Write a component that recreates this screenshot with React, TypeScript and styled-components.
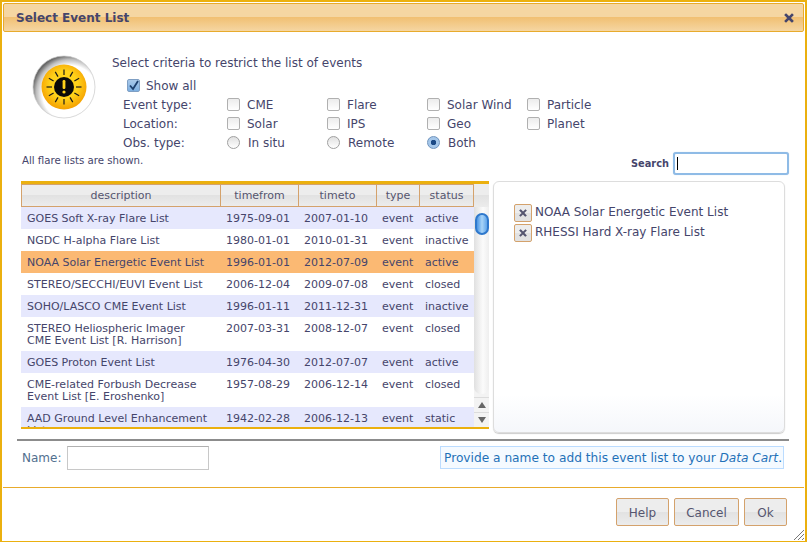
import React from 'react';
import styled, { createGlobalStyle } from 'styled-components';

const GlobalStyle = createGlobalStyle`
    html, body { margin: 0; padding: 0; background: #fff; }
    body { font-family: "DejaVu Sans", Verdana, sans-serif; font-size: 11px; color: #45456b; }
    * { box-sizing: border-box; }
`;

const Dialog = styled.div`
    position: relative;
    width: 807px;
    height: 542px;
    border: 2px solid #ebb00f;
    border-bottom-width: 1px;
    padding: 1px 1px 0;
    background: #fff;
    display: flex;
    flex-direction: column;
`;

const TitleBar = styled.div`
    height: 29px;
    flex: none;
    border: 1px solid #e8ab2c;
    border-radius: 2px;
    background: linear-gradient(to bottom, #f5d6a2 0, #f5d6a2 50%, #f1c073 50%, #f5d6a2 100%);
    display: flex;
    align-items: center;
    justify-content: space-between;
    padding: 0 9px 0 12px;
    font-weight: bold;
    font-size: 12px;
    color: #45456b;
`;

const Body = styled.div`
    flex: 1;
    display: flex;
    flex-direction: column;
    min-height: 0;
`;

const Criteria = styled.div`
    display: flex;
    align-items: flex-start;
    height: 118px;
    padding: 23px 0 0 29px;
    flex: none;
`;

const Badge = styled.svg`
    width: 64px;
    height: 64px;
    flex: none;
`;

const CriteriaForm = styled.div`
    margin-left: 16px;
    display: flex;
    flex-direction: column;
    flex: none;
    font-size: 12px;
`;

const Intro = styled.div`
    height: 16px;
    line-height: 16px;
`;

const ShowAll = styled.label`
    display: flex;
    align-items: center;
    height: 19px;
    margin: 5px 0 0 15px;
    gap: 6px;
`;

const FilterRow = styled.div`
    display: flex;
    align-items: center;
    height: 19px;
    flex: none;
    padding-left: 11px;
`;

const FilterLabel = styled.span`
    width: 104px;
    flex: none;
`;

const Option = styled.label`
    width: 100px;
    flex: none;
    display: flex;
    align-items: center;
    gap: 7px;
`;

const CheckBox = styled.span<{ $checked?: boolean }>`
    width: 13px;
    height: 13px;
    flex: none;
    display: flex;
    align-items: center;
    justify-content: center;
    border: 1px solid ${p => (p.$checked ? '#7f9fc4' : '#b0b0b0')};
    border-radius: 2px;
    background: ${p => (p.$checked ? 'linear-gradient(#a9c9ea, #7eb0e2)' : 'linear-gradient(#ececec, #ffffff)')};
`;

const Radio = styled.span<{ $checked?: boolean }>`
    width: 13px;
    height: 13px;
    flex: none;
    border: 1px solid ${p => (p.$checked ? '#6f93bd' : '#a0a0a0')};
    border-radius: 50%;
    background: ${p => (p.$checked ? 'radial-gradient(circle, #1c4a86 0, #1c4a86 2.5px, #a5c7ea 3px)' : 'linear-gradient(#e0e0e0, #ffffff)')};
    margin-right: 1px;
`;

const SearchRow = styled.div`
    flex: none;
    height: 31px;
    display: flex;
    align-items: flex-start;
    justify-content: space-between;
    padding: 2px 15px 0 19px;
`;

const Hint = styled.div`
    font-size: 10.2px;
    line-height: 12px;
    margin-top: 3px;
`;

const SearchGroup = styled.label`
    display: flex;
    align-items: center;
    gap: 4px;
    font-size: 9.8px;
    font-weight: bold;
`;

const SearchInput = styled.div`
    width: 116px;
    height: 23px;
    border: 2px solid #8fbbe6;
    border-radius: 3px;
    box-shadow: 0 0 1px #b8cfe8;
    padding: 3px 2px;
    background: #fff;
    &::before {
        content: "";
        display: block;
        width: 1px;
        height: 13px;
        background: #000;
    }
`;

const Panels = styled.div`
    flex: none;
    display: flex;
    align-items: flex-start;
    gap: 4px;
    padding-left: 18px;
    height: 252px;
`;

const TableFrame = styled.div`
    width: 468px;
    height: 248px;
    border-top: 3px solid #ebb00f;
    border-bottom: 2px solid #ebb00f;
    display: flex;
    overflow: hidden;
`;

const Table = styled.div`
    width: 453px;
    flex: none;
    display: flex;
    flex-direction: column;
    overflow: hidden;
`;

const COLUMNS = '199px 78px 78px 43px 54px';

const HeaderRow = styled.div`
    display: grid;
    grid-template-columns: ${COLUMNS};
    height: 23px;
    flex: none;
`;

const HeaderCell = styled.div`
    display: flex;
    align-items: center;
    justify-content: center;
    border: 1px solid #d4a26c;
    margin-right: -1px;
    background: linear-gradient(to bottom, #ededed 0, #ededed 50%, #e2e2e2 50%, #ececec 100%);
    color: #55556f;
    font-size: 11px;
`;

const Row = styled.div<{ $tint: 'plain' | 'odd' | 'picked' }>`
    display: grid;
    grid-template-columns: ${COLUMNS};
    flex: none;
    background: ${p => ({ plain: '#fff', odd: '#e6e8fd', picked: '#fbb973' }[p.$tint])};
`;

const Cell = styled.div`
    padding: 6px 0 4px 6px;
    line-height: 12px;
    font-size: 11px;
    white-space: nowrap;
`;

const DescriptionCell = styled(Cell)`
    padding-right: 9px;
    white-space: normal;
`;

const Scrollbar = styled.div`
    width: 15px;
    flex: none;
    display: flex;
    flex-direction: column;
    background: #f3f3f3;
`;

const ScrollHead = styled.div`
    height: 23px;
    flex: none;
    background: linear-gradient(to bottom, #ededed 0, #ededed 50%, #e2e2e2 50%, #ececec 100%);
`;

const ScrollTrack = styled.div`
    flex: 1;
    padding-top: 6px;
    display: flex;
    justify-content: center;
    border-radius: 0 0 7px 7px;
    margin-bottom: 3px;
    background: linear-gradient(to right, #e0e0e0, #fbfbfb 60%, #eeeeee);
`;

const Thumb = styled.div`
    width: 14px;
    height: 22px;
    border-radius: 7px;
    border: 2px solid #2f78cc;
    background: linear-gradient(to right, #4b95e4, #a8d4f8 50%, #5fa4ea);
`;

const ScrollArrow = styled.div<{ $up?: boolean }>`
    height: 15px;
    flex: none;
    display: flex;
    align-items: center;
    justify-content: center;
    background: #f3f3f3;
    border-top: 1px solid #dcdcdc;
    &::before {
        content: "";
        border-left: 4px solid transparent;
        border-right: 4px solid transparent;
        ${p => (p.$up ? 'border-bottom: 6px solid #666;' : 'border-top: 6px solid #666;')}
    }
`;

const Selected = styled.div`
    width: 292px;
    height: 252px;
    border: 1px solid #ddd;
    border-radius: 6px;
    background: linear-gradient(to bottom, #fff 85%, #f5f7fb);
    padding: 21px 20px;
    box-shadow: 0 1px 1px #ccc;
`;

const Chip = styled.div`
    display: flex;
    align-items: center;
    height: 20px;
    font-size: 12px;
    gap: 3px;
`;

const ChipLabel = styled.span`
    margin-top: -2px;
`;

const ChipRemove = styled.span`
    width: 18px;
    height: 18px;
    border: 1px solid #d4a26c;
    border-radius: 2px;
    background: linear-gradient(to bottom, #ededed 50%, #e2e2e2 50%);
    display: flex;
    align-items: center;
    justify-content: center;
`;

const Divider = styled.div`
    flex: none;
    height: 2px;
    margin: 6px 15px 0 14px;
    background: #8c8c8c;
`;

const NameRow = styled.div`
    flex: none;
    height: 46px;
    display: flex;
    align-items: flex-start;
    justify-content: space-between;
    padding: 5px 20px 0 19px;
`;

const NameGroup = styled.label`
    display: flex;
    align-items: center;
    gap: 6px;
    font-size: 12px;
    color: #52708f;
`;

const NameInput = styled.div`
    width: 142px;
    height: 24px;
    border: 1px solid #c8c8c8;
    border-top-color: #b0b0b0;
    background: #fff;
`;

const Notice = styled.div`
    height: 23px;
    width: 344px;
    white-space: nowrap;
    border: 1px solid #bbdcff;
    background: #f5faff;
    color: #1f71b8;
    font-size: 12.2px;
    display: flex;
    align-items: center;
    padding: 1px 0 0 3px;
    & em { margin-left: 0.3em; }
`;

const Footer = styled.div`
    flex: 1;
    border-top: 1px solid #e8ab2c;
    display: flex;
    justify-content: flex-end;
    align-items: flex-start;
    gap: 5px;
    padding: 10px 17px 0 0;
`;

const Button = styled.button<{ $width: number }>`
    width: ${p => p.$width}px;
    height: 28px;
    padding: 2px 0 0;
    border: 1px solid #d4a26c;
    border-radius: 2px;
    background: linear-gradient(to bottom, #ededed 0, #ededed 50%, #e2e2e2 50%, #ececec 100%);
    color: #55556f;
    font: 12px "DejaVu Sans", Verdana, sans-serif;
`;

const Grip = styled.svg`
    position: absolute;
    right: 0;
    bottom: 0;
    width: 13px;
    height: 13px;
`;

const Cross = ({ size, color }: { size: number; color: string }) => (
    <svg width={size} height={size} viewBox="0 0 10 10">
        <path d="M2 2 L8 8 M8 2 L2 8" stroke={color} strokeWidth="2.6" strokeLinecap="square" />
    </svg>
);

const SunBadge = () => {
    const rays = Array.from({ length: 12 }, (_, i) => i * 30);
    return (
        <Badge viewBox="0 0 64 64">
            <defs>
                <radialGradient id="shade" cx="0.6" cy="0.6" r="0.62">
                    <stop offset="0.72" stopColor="#ffffff" />
                    <stop offset="0.88" stopColor="#bdbdbd" />
                    <stop offset="1" stopColor="#666666" />
                </radialGradient>
                <radialGradient id="amber" cx="0.5" cy="0.45" r="0.55">
                    <stop offset="0.55" stopColor="#ffd21a" />
                    <stop offset="1" stopColor="#f5a000" />
                </radialGradient>
            </defs>
            <circle cx="32" cy="32" r="31" fill="url(#shade)" stroke="#c8c8c8" strokeWidth="0.7" />
            <circle cx="32" cy="32" r="22.5" fill="url(#amber)" />
            {rays.map(a => (
                <line key={a} x1="32" y1="20" x2="32" y2="14.5" transform={`rotate(${a} 32 32)`} stroke="#1a1a1a" strokeWidth="1.2" />
            ))}
            <circle cx="32" cy="32" r="10" fill="#0a0a0a" />
            <rect x="30.6" y="25" width="2.8" height="9" rx="1.2" fill="#ffd21a" />
            <circle cx="32" cy="37" r="1.6" fill="#ffd21a" />
        </Badge>
    );
};

const ROWS: { name: string; from: string; to: string; status: string; tint: 'plain' | 'odd' | 'picked' }[] = [
    { name: 'GOES Soft X-ray Flare List', from: '1975-09-01', to: '2007-01-10', status: 'active', tint: 'odd' },
    { name: 'NGDC H-alpha Flare List', from: '1980-01-01', to: '2010-01-31', status: 'inactive', tint: 'plain' },
    { name: 'NOAA Solar Energetic Event List', from: '1996-01-01', to: '2012-07-09', status: 'active', tint: 'picked' },
    { name: 'STEREO/SECCHI/EUVI Event List', from: '2006-12-04', to: '2009-07-08', status: 'closed', tint: 'plain' },
    { name: 'SOHO/LASCO CME Event List', from: '1996-01-11', to: '2011-12-31', status: 'inactive', tint: 'odd' },
    { name: 'STEREO Heliospheric Imager CME Event List [R. Harrison]', from: '2007-03-31', to: '2008-12-07', status: 'closed', tint: 'plain' },
    { name: 'GOES Proton Event List', from: '1976-04-30', to: '2012-07-07', status: 'active', tint: 'odd' },
    { name: 'CME-related Forbush Decrease Event List [E. Eroshenko]', from: '1957-08-29', to: '2006-12-14', status: 'closed', tint: 'plain' },
    { name: 'AAD Ground Level Enhancement List', from: '1942-02-28', to: '2006-12-13', status: 'static', tint: 'odd' },
];

const FILTERS = [
    { label: 'Event type:', options: ['CME', 'Flare', 'Solar Wind', 'Particle'] },
    { label: 'Location:', options: ['Solar', 'IPS', 'Geo', 'Planet'] },
];

export default function App() {
    return (
        <>
            <GlobalStyle />
            <Dialog>
                <TitleBar>
                    Select Event List
                    <Cross size={10} color="#45456b" />
                </TitleBar>
                <Body>
                    <Criteria>
                        <SunBadge />
                        <CriteriaForm>
                            <Intro>Select criteria to restrict the list of events</Intro>
                            <ShowAll>
                                <CheckBox $checked>
                                    <svg width="11" height="11" viewBox="0 0 11 11">
                                        <path d="M2 5.5 L5 9 L10 1" fill="none" stroke="#1c3f6e" strokeWidth="1.8" />
                                    </svg>
                                </CheckBox>
                                Show all
                            </ShowAll>
                            {FILTERS.map(f => (
                                <FilterRow key={f.label}>
                                    <FilterLabel>{f.label}</FilterLabel>
                                    {f.options.map(o => (
                                        <Option key={o}>
                                            <CheckBox />
                                            {o}
                                        </Option>
                                    ))}
                                </FilterRow>
                            ))}
                            <FilterRow>
                                <FilterLabel>Obs. type:</FilterLabel>
                                <Option><Radio />In situ</Option>
                                <Option><Radio />Remote</Option>
                                <Option><Radio $checked />Both</Option>
                            </FilterRow>
                        </CriteriaForm>
                    </Criteria>
                    <SearchRow>
                        <Hint>All flare lists are shown.</Hint>
                        <SearchGroup>
                            Search
                            <SearchInput />
                        </SearchGroup>
                    </SearchRow>
                    <Panels>
                        <TableFrame>
                            <Table>
                                <HeaderRow>
                                    {['description', 'timefrom', 'timeto', 'type', 'status'].map(h => (
                                        <HeaderCell key={h}>{h}</HeaderCell>
                                    ))}
                                </HeaderRow>
                                {ROWS.map(r => (
                                    <Row key={r.name} $tint={r.tint}>
                                        <DescriptionCell>{r.name}</DescriptionCell>
                                        <Cell>{r.from}</Cell>
                                        <Cell>{r.to}</Cell>
                                        <Cell>event</Cell>
                                        <Cell>{r.status}</Cell>
                                    </Row>
                                ))}
                            </Table>
                            <Scrollbar>
                                <ScrollHead />
                                <ScrollTrack><Thumb /></ScrollTrack>
                                <ScrollArrow $up />
                                <ScrollArrow />
                            </Scrollbar>
                        </TableFrame>
                        <Selected>
                            <Chip>
                                <ChipRemove><Cross size={8} color="#55556f" /></ChipRemove>
                                <ChipLabel>NOAA Solar Energetic Event List</ChipLabel>
                            </Chip>
                            <Chip>
                                <ChipRemove><Cross size={8} color="#55556f" /></ChipRemove>
                                <ChipLabel>RHESSI Hard X-ray Flare List</ChipLabel>
                            </Chip>
                        </Selected>
                    </Panels>
                    <Divider />
                    <NameRow>
                        <NameGroup>
                            Name:
                            <NameInput />
                        </NameGroup>
                        <Notice>
                            Provide a name to add this event list to your <em>Data Cart</em>.
                        </Notice>
                    </NameRow>
                    <Footer>
                        <Button $width={53}>Help</Button>
                        <Button $width={65}>Cancel</Button>
                        <Button $width={43}>Ok</Button>
                    </Footer>
                </Body>
                <Grip viewBox="0 0 13 13">
                    <path d="M12 2 L2 12 M12 6 L6 12 M12 10 L10 12" stroke="#777" strokeWidth="1" />
                </Grip>
            </Dialog>
        </>
    );
}
